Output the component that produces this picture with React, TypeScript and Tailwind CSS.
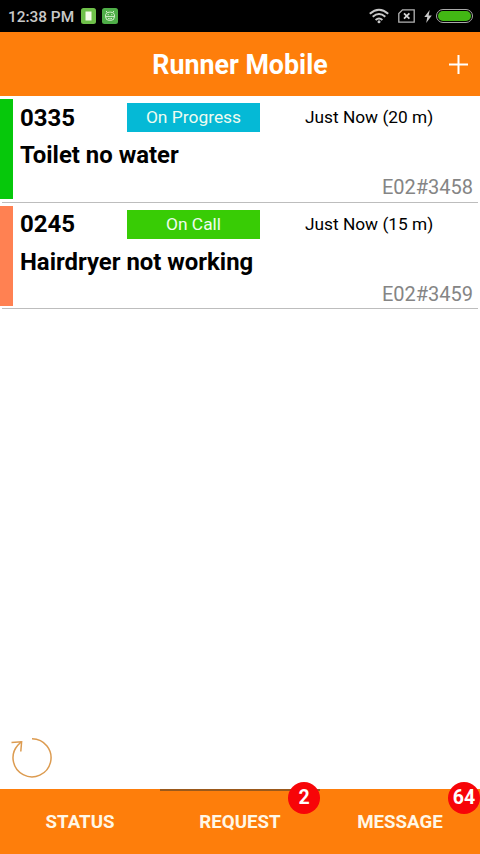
import { useState } from 'react';

interface Job {
  room: string;
  title: string;
  status: string;
  time: string;
  code: string;
  barClass: string;
  statusClass: string;
}

const jobs: Job[] = [
  {
    room: '0335',
    title: 'Toilet no water',
    status: 'On Progress',
    time: 'Just Now (20 m)',
    code: 'E02#3458',
    barClass: 'bg-[#06c80b]',
    statusClass: 'bg-[#05b9d6]',
  },
  {
    room: '0245',
    title: 'Hairdryer not working',
    status: 'On Call',
    time: 'Just Now (15 m)',
    code: 'E02#3459',
    barClass: 'bg-[#ff8152]',
    statusClass: 'bg-[#38cc05]',
  },
];

const tabs = [
  { id: 'status', label: 'STATUS', count: 0 },
  { id: 'request', label: 'REQUEST', count: 2 },
  { id: 'message', label: 'MESSAGE', count: 64 },
];

function StatusBar() {
  return (
    <div className="flex h-8 shrink-0 items-center bg-black pl-2 pr-[7px] text-[#c8c8c8]">
      <span className="pt-px text-[15.4px] font-medium leading-8">12:38 PM</span>
      <svg className="ml-[7px]" width="15" height="16" viewBox="0 0 15 16">
        <rect width="15" height="16" rx="2.5" fill="#6fc04a" />
        <path d="M4.5 3.5h6v9h-6z" fill="#f4fbe9" />
      </svg>
      <svg className="ml-1.5" width="16" height="16" viewBox="0 0 16 16" fill="none" stroke="#d5efcd">
        <rect width="16" height="16" rx="2.5" fill="#4fae48" stroke="none" />
        <path d="M4.2 3l1 1.6M11.8 3l-1 1.6" />
        <rect x="3.5" y="4.2" width="9" height="8.3" rx="4" />
        <path d="M3.4 8.6h9.2M6 10.4q2 1.2 4 0M6.2 6v1.2M9.8 6v1.2" />
      </svg>

      <div className="ml-auto flex items-center">
        <svg width="20" height="16" viewBox="0 0 20 16" fill="none" stroke="#c8c8c8" strokeWidth="2">
          <path d="M.8 5.7Q10-2.3 19.2 5.7M3.7 8.8Q10 3.3 16.3 8.8M6.6 11.9Q10 9.1 13.4 11.9" />
          <circle cx="10" cy="13.7" r="1.5" fill="#c8c8c8" stroke="none" />
        </svg>
        <svg className="ml-[9.5px]" width="17" height="14" viewBox="0 0 17 14" fill="none" stroke="#b4b4b4" strokeWidth="1.3">
          <path d="M4.5.8h11.7v12.4H.8V4.5z" />
          <path d="M6 4.3l5.4 5.4M11.4 4.3L6 9.7" stroke="#d8d8d8" strokeWidth="1.7" />
        </svg>
        <svg className="ml-[9px]" width="8" height="13" viewBox="0 0 8 13" fill="#c8c8c8">
          <path d="M5.7 0L.3 7.1h3L2.2 13 7.8 5.4H4.6z" />
        </svg>
        <div className="ml-1 h-3.5 w-[37px] rounded-full border border-[#a9a9a9] p-px">
          <div className="h-full rounded-full bg-[#42b814]" />
        </div>
      </div>
    </div>
  );
}

function JobRow({ job }: { job: Job }) {
  return (
    <div className="h-[106.6px] pt-[3px]">
      <div className="flex h-[100px]">
        <div className={`w-[13px] shrink-0 ${job.barClass}`} />
        <div className="flex-1 px-[7px] text-black">
          <div className="flex h-[37px] items-center">
            <div className="w-[107px] text-2xl font-bold">{job.room}</div>
            <div className={`flex h-[29px] w-[133px] items-center justify-center text-[17.4px] text-[#effcf0] ${job.statusClass}`}>
              {job.status}
            </div>
            <div className="ml-[45px] pt-px text-[17.3px]">{job.time}</div>
          </div>
          <div className="h-[38px] text-[23.9px] font-bold leading-[38px]">{job.title}</div>
          <div className="text-right text-[20px] leading-[26px] text-[#858585]">{job.code}</div>
        </div>
      </div>
      <div className="mx-[2px] mt-[2.5px] h-px bg-[#bdbdbd]" />
    </div>
  );
}

export default function App() {
  const [active, setActive] = useState('request');

  return (
    <div className="flex h-[854px] w-[480px] flex-col overflow-hidden bg-white font-[Roboto,sans-serif]">
      <StatusBar />

      {/* Header */}
      <header className="grid h-16 shrink-0 grid-cols-[1fr_auto_1fr] items-center bg-[#fe7e0b] pr-3 pl-3 text-white">
        <span />
        <h1 className="pt-0.5 text-[26.8px] font-bold">Runner Mobile</h1>
        <button className="justify-self-end" aria-label="Add">
          <svg width="19" height="19" viewBox="0 0 19 19" stroke="white" strokeWidth="2">
            <path d="M9.5 0v19M0 9.5h19" />
          </svg>
        </button>
      </header>

      {/* Job list */}
      <main className="flex-1">
        {jobs.map(job => (
          <JobRow key={job.code} job={job} />
        ))}
      </main>

      <button className="mb-[11px] ml-2.5 self-start" aria-label="Refresh">
        <svg className="block" width="43" height="42" viewBox="0 0 43 42" fill="none" stroke="#dc9b50" strokeWidth="1.5">
          <path d="M22 2.8A19 19 0 1 1 7.8 9.2L11.3 5.8" />
          <path d="M1.5 6.5L11.6 5.7L10.8 15.5" />
        </svg>
      </button>

      {/* Bottom tabs */}
      <nav className="grid h-[65.5px] shrink-0 grid-cols-3 bg-[#fe7e0b] text-[18.7px] font-bold text-[#fff7e6]">
        {tabs.map(tab => (
          <button
            key={tab.id}
            onClick={() => setActive(tab.id)}
            className={`relative border-t-2 ${active === tab.id ? 'border-[#9b591b]' : 'border-transparent'}`}
          >
            {tab.label}
            {tab.count > 0 && (
              <span className="absolute -top-[9px] right-0 flex size-8 items-center justify-center rounded-full bg-[#f70508] pt-px text-[19.5px] text-white">
                {tab.count}
              </span>
            )}
          </button>
        ))}
      </nav>
    </div>
  );
}
